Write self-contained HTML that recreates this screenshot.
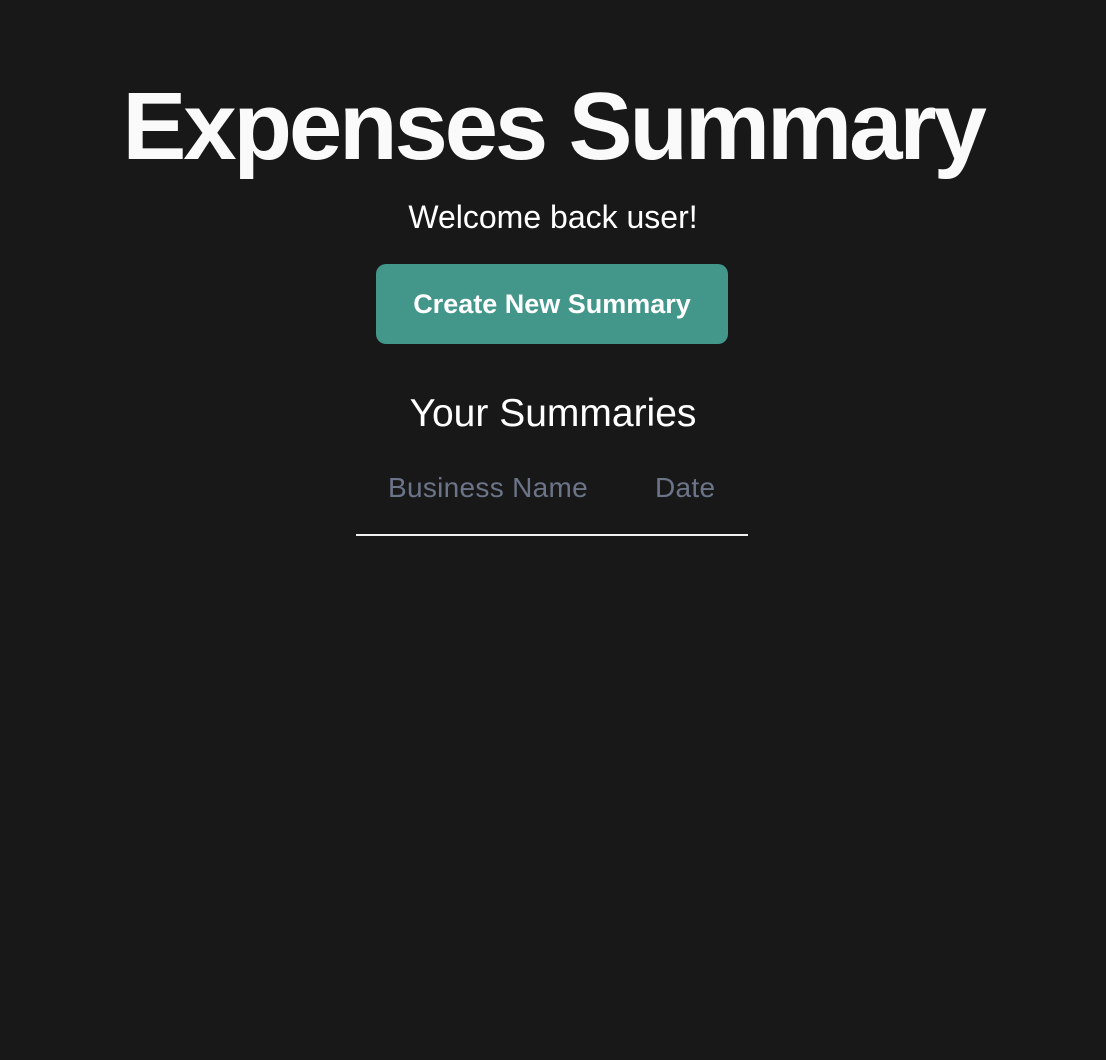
<!DOCTYPE html>
<html><head><meta charset="utf-8"><style>
body{margin:0;background:#181818;width:1106px;height:1060px;font-family:"Liberation Sans",sans-serif;color:#fff;position:relative;overflow:hidden}
.a{position:absolute;left:0;width:1106px;text-align:center;white-space:nowrap}
h1{margin:0;font-size:96px;font-weight:bold;letter-spacing:-3.2px;top:72px;color:#fafafa}
.w{top:199px;font-size:32px}
.btn{position:absolute;left:376px;top:264px;width:352px;height:80px;background:#43968a;border-radius:10px;text-align:center;line-height:80px;font-size:27px;font-weight:bold;color:#fff}
.y{top:392px;font-size:39px}
.th{position:absolute;top:472px;font-size:28px;color:#6b7488;letter-spacing:0.3px}
.line{position:absolute;left:356px;top:534px;width:392px;height:2px;background:#f0f0f0}
</style></head><body>
<h1 class="a">Expenses Summary</h1>
<div class="a w">Welcome back user!</div>
<div class="btn">Create New Summary</div>
<div class="a y">Your Summaries</div>
<div class="th" style="left:388px">Business Name</div>
<div class="th" style="left:655px">Date</div>
<div class="line"></div>
</body></html>
